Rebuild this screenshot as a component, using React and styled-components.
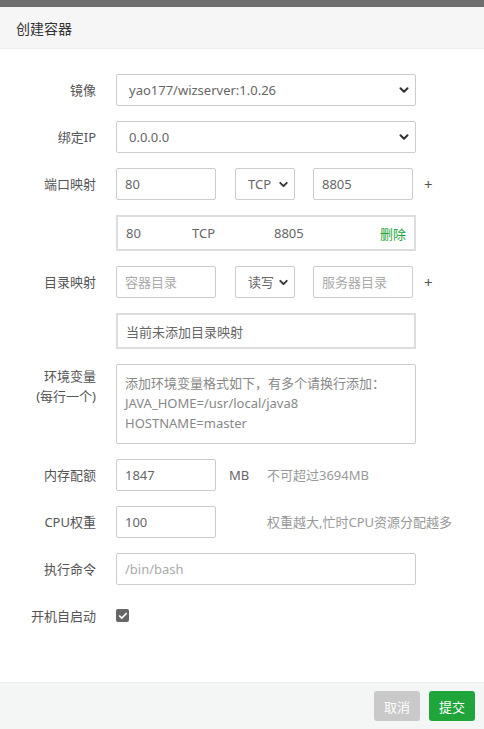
import styled, { createGlobalStyle } from "styled-components";
import { ChevronDown, Check } from "lucide-react";

const GlobalStyle = createGlobalStyle`
    html, body {
        margin: 0;
        padding: 0;
        background: #fff;
    }
    body {
        font-family: "Noto Sans", "Noto Sans CJK SC", sans-serif;
        font-size: 13px;
        color: #666;
    }
    * { box-sizing: border-box; }
`;

const App = () => {
    return (
        <Page>
            <GlobalStyle />
            <Backdrop />
            <Header>创建容器</Header>
            <Body>
                <Row>
                    <Label>镜像</Label>
                    <SelectWrap $width={300}>
                        <Select defaultValue="yao177/wizserver:1.0.26">
                            <option>yao177/wizserver:1.0.26</option>
                        </Select>
                        <Arrow><ChevronDown size={14} strokeWidth={3.5} /></Arrow>
                    </SelectWrap>
                </Row>
                <Row>
                    <Label>绑定IP</Label>
                    <SelectWrap $width={300}>
                        <Select defaultValue="0.0.0.0">
                            <option>0.0.0.0</option>
                        </Select>
                        <Arrow><ChevronDown size={14} strokeWidth={3.5} /></Arrow>
                    </SelectWrap>
                </Row>
                <Row>
                    <Label>端口映射</Label>
                    <Inline>
                        <Input $width={100} defaultValue="80" />
                        <SelectWrap $width={60}>
                            <Select defaultValue="TCP">
                                <option>TCP</option>
                                <option>UDP</option>
                            </Select>
                            <Arrow><ChevronDown size={13} strokeWidth={3.5} /></Arrow>
                        </SelectWrap>
                        <Input $width={100} $tight defaultValue="8805" />
                        <Plus>+</Plus>
                    </Inline>
                </Row>
                <Row>
                    <Label />
                    <ListBox>
                        <Cell $width={67}>80</Cell>
                        <Cell $width={83}>TCP</Cell>
                        <Cell>8805</Cell>
                        <Remove>删除</Remove>
                    </ListBox>
                </Row>
                <Row>
                    <Label>目录映射</Label>
                    <Inline>
                        <Input $width={100} placeholder="容器目录" />
                        <SelectWrap $width={60}>
                            <Select defaultValue="读写">
                                <option>读写</option>
                                <option>只读</option>
                            </Select>
                            <Arrow><ChevronDown size={13} strokeWidth={3.5} /></Arrow>
                        </SelectWrap>
                        <Input $width={100} $tight placeholder="服务器目录" />
                        <Plus>+</Plus>
                    </Inline>
                </Row>
                <Row>
                    <Label />
                    <ListBox>
                        <Cell>当前未添加目录映射</Cell>
                    </ListBox>
                </Row>
                <Row>
                    <Label $multi>
                        环境变量
                        <br />
                        (每行一个)
                    </Label>
                    <TextArea
                        placeholder={"添加环境变量格式如下，有多个请换行添加：\nJAVA_HOME=/usr/local/java8\nHOSTNAME=master"}
                    />
                </Row>
                <Row>
                    <Label>内存配额</Label>
                    <Input $width={100} defaultValue="1847" />
                    <Unit>MB</Unit>
                    <Hint>不可超过3694MB</Hint>
                </Row>
                <Row>
                    <Label>CPU权重</Label>
                    <Input $width={100} defaultValue="100" />
                    <Unit />
                    <Hint>权重越大,忙时CPU资源分配越多</Hint>
                </Row>
                <Row>
                    <Label>执行命令</Label>
                    <Input $width={300} placeholder="/bin/bash" />
                </Row>
                <Row>
                    <Label>开机自启动</Label>
                    <CheckBox>
                        <Check size={10} strokeWidth={4} color="#fff" />
                    </CheckBox>
                </Row>
            </Body>
            <Footer>
                <Button $variant="cancel">取消</Button>
                <Button $variant="submit">提交</Button>
            </Footer>
        </Page>
    );
};

const Page = styled.div`
    display: flex;
    flex-direction: column;
    width: 484px;
    height: 729px;
    background: #fff;
    overflow: hidden;
`;

const Backdrop = styled.div`
    height: 7px;
    flex-shrink: 0;
    background: #6e6e6e;
`;

const Header = styled.div`
    height: 42px;
    flex-shrink: 0;
    padding: 0 16px;
    display: flex;
    align-items: center;
    background: #f6f6f6;
    border-bottom: 1px solid #eee;
    color: #333;
    font-size: 14px;
`;

const Body = styled.div`
    flex: 1;
    padding: 25px 0 0 0;
    display: flex;
    flex-direction: column;
    gap: 15px;
`;

const Row = styled.div`
    display: flex;
    align-items: flex-start;
    min-height: 32px;
`;

const Label = styled.div`
    width: 96px;
    margin-right: 20px;
    flex-shrink: 0;
    text-align: right;
    line-height: ${(p) => (p.$multi ? "20px" : "32px")};
    padding-top: ${(p) => (p.$multi ? "2px" : "0")};
    color: #555;
    font-size: 13px;
`;

const Inline = styled.div`
    display: flex;
    align-items: center;
    gap: 19px;
`;

const Input = styled.input`
    width: ${(p) => p.$width}px;
    height: 32px;
    margin-left: ${(p) => (p.$tight ? "-1px" : "0")};
    padding: 0 8px;
    border: 1px solid #ccc;
    border-radius: 2px;
    font-family: inherit;
    font-size: 13px;
    color: #666;
    outline: none;
    &::placeholder {
        color: #aaa;
    }
`;

const SelectWrap = styled.div`
    position: relative;
    width: ${(p) => p.$width}px;
    height: 32px;
`;

const Select = styled.select`
    appearance: none;
    width: 100%;
    height: 32px;
    padding: 0 0 0 12px;
    border: 1px solid #ccc;
    border-radius: 2px;
    background: #fff;
    font-family: inherit;
    font-size: 13px;
    color: #666;
    outline: none;
`;

const Arrow = styled.span`
    position: absolute;
    right: 5px;
    top: 0;
    height: 32px;
    display: flex;
    align-items: center;
    color: #333;
    pointer-events: none;
`;

const Plus = styled.span`
    margin-left: -8px;
    font-size: 15px;
    color: #555;
`;

const ListBox = styled.div`
    width: 300px;
    height: 36px;
    padding: 0 8px;
    display: flex;
    align-items: center;
    border: 2px solid #ddd;
    color: #666;
    font-size: 13px;
`;

const Cell = styled.span`
    width: ${(p) => (p.$width ? `${p.$width - 1}px` : "auto")};
    flex-shrink: 0;
`;

const Remove = styled.span`
    margin-left: auto;
    color: #20a53a;
    cursor: pointer;
`;

const TextArea = styled.textarea`
    width: 300px;
    height: 80px;
    padding: 8px 8px;
    border: 1px solid #ccc;
    border-radius: 2px;
    font-family: inherit;
    font-size: 13px;
    line-height: 20px;
    color: #666;
    resize: none;
    outline: none;
    &::placeholder {
        color: #888;
    }
`;

const Unit = styled.span`
    width: 51px;
    padding-left: 13px;
    line-height: 32px;
    color: #666;
`;

const Hint = styled.span`
    line-height: 32px;
    color: #999;
`;

const CheckBox = styled.span`
    margin-top: 9px;
    width: 13px;
    height: 13px;
    border-radius: 2px;
    background: #666;
    display: flex;
    align-items: center;
    justify-content: center;
`;

const Footer = styled.div`
    height: 47px;
    flex-shrink: 0;
    padding: 0 9px;
    display: flex;
    justify-content: flex-end;
    align-items: center;
    gap: 9px;
    background: #f4f5f5;
    border-top: 1px solid #eee;
`;

const Button = styled.button`
    width: 46px;
    height: 30px;
    border: none;
    border-radius: 3px;
    font-family: inherit;
    font-size: 13px;
    color: #fff;
    background: ${(p) => (p.$variant === "submit" ? "#20a53a" : "#c9c9c9")};
    cursor: pointer;
`;

export default App;
